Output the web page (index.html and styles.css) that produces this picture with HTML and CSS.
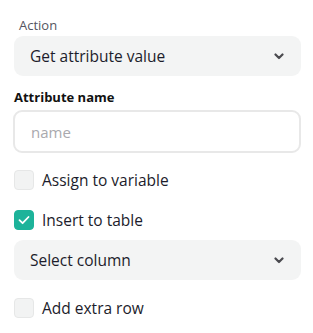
FILE: index.html
```html
<!DOCTYPE html>
<html>
<head>
<meta charset="utf-8">
<link rel="stylesheet" href="styles.css">
</head>
<body>
<div class="panel">
  <div class="field-label">Action</div>
  <div class="select">
    <span class="select-text">Get attribute value</span>
    <svg class="chev" width="10" height="7" viewBox="0 0 10 7"><path d="M1.5 1.5 L5 5 L8.5 1.5" fill="none" stroke="#4a4a4f" stroke-width="2.2" stroke-linecap="round" stroke-linejoin="round"/></svg>
  </div>
  <div class="bold-label">Attribute name</div>
  <div class="input"><span class="placeholder">name</span></div>
  <label class="check">
    <span class="box"></span>
    <span class="check-text">Assign to variable</span>
  </label>
  <label class="check">
    <span class="box on"><svg width="14" height="14" viewBox="0 0 14 14"><path d="M2.5 7.2 L5.6 10.2 L11.5 4" fill="none" stroke="#fff" stroke-width="1.8" stroke-linecap="round" stroke-linejoin="round"/></svg></span>
    <span class="check-text">Insert to table</span>
  </label>
  <div class="select select2">
    <span class="select-text">Select column</span>
    <svg class="chev" width="10" height="7" viewBox="0 0 10 7"><path d="M1.5 1.5 L5 5 L8.5 1.5" fill="none" stroke="#4a4a4f" stroke-width="2.2" stroke-linecap="round" stroke-linejoin="round"/></svg>
  </div>
  <label class="check">
    <span class="box"></span>
    <span class="check-text">Add extra row</span>
  </label>
</div>
</body>
</html>
```
FILE: styles.css
```css
html, body {
  margin: 0;
  padding: 0;
  background: #ffffff;
}
body {
  font-family: "Open Sans", "Noto Sans", sans-serif;
  color: #1c1c2b;
}
.panel {
  padding: 16px 12px 0 14px;
  display: flex;
  flex-direction: column;
}
.field-label {
  font-size: 13px;
  line-height: 18px;
  color: #555560;
  padding-left: 5px;
  margin-bottom: 2px;
}
.select {
  height: 40px;
  background: #f3f4f4;
  border-radius: 9px;
  display: flex;
  align-items: center;
  justify-content: space-between;
  padding: 0 17px 0 16px;
  box-sizing: border-box;
}
.select-text {
  font-size: 15.5px;
  color: #1c1c2b;
}
.chev {
  display: block;
}
.bold-label {
  font-size: 13px;
  font-weight: 700;
  line-height: 18px;
  margin-top: 12px;
  color: #111;
}
.input {
  margin-top: 4px;
  margin-left: -1px;
  height: 43px;
  border: 2px solid #e8e8e8;
  border-radius: 9px;
  box-sizing: border-box;
  display: flex;
  align-items: center;
  padding-left: 16px;
}
.placeholder {
  font-size: 15px;
  color: #a9a9ae;
}
.check {
  display: flex;
  align-items: center;
  gap: 8px;
  height: 20px;
  margin-top: 17px;
}
.check + .check {
  margin-top: 20px;
}
.box {
  width: 20px;
  height: 20px;
  box-sizing: border-box;
  border-radius: 4px;
  background: #f2f3f3;
  border: 1px solid #e6e7e7;
  display: flex;
  align-items: center;
  justify-content: center;
}
.box.on {
  background: #1db39a;
  border-color: #1db39a;
}
.check-text {
  font-size: 15.5px;
  color: #1c1c2b;
}
.select2 {
  margin-top: 10px;
}
.select2 + .check {
  margin-top: 18px;
}
```
